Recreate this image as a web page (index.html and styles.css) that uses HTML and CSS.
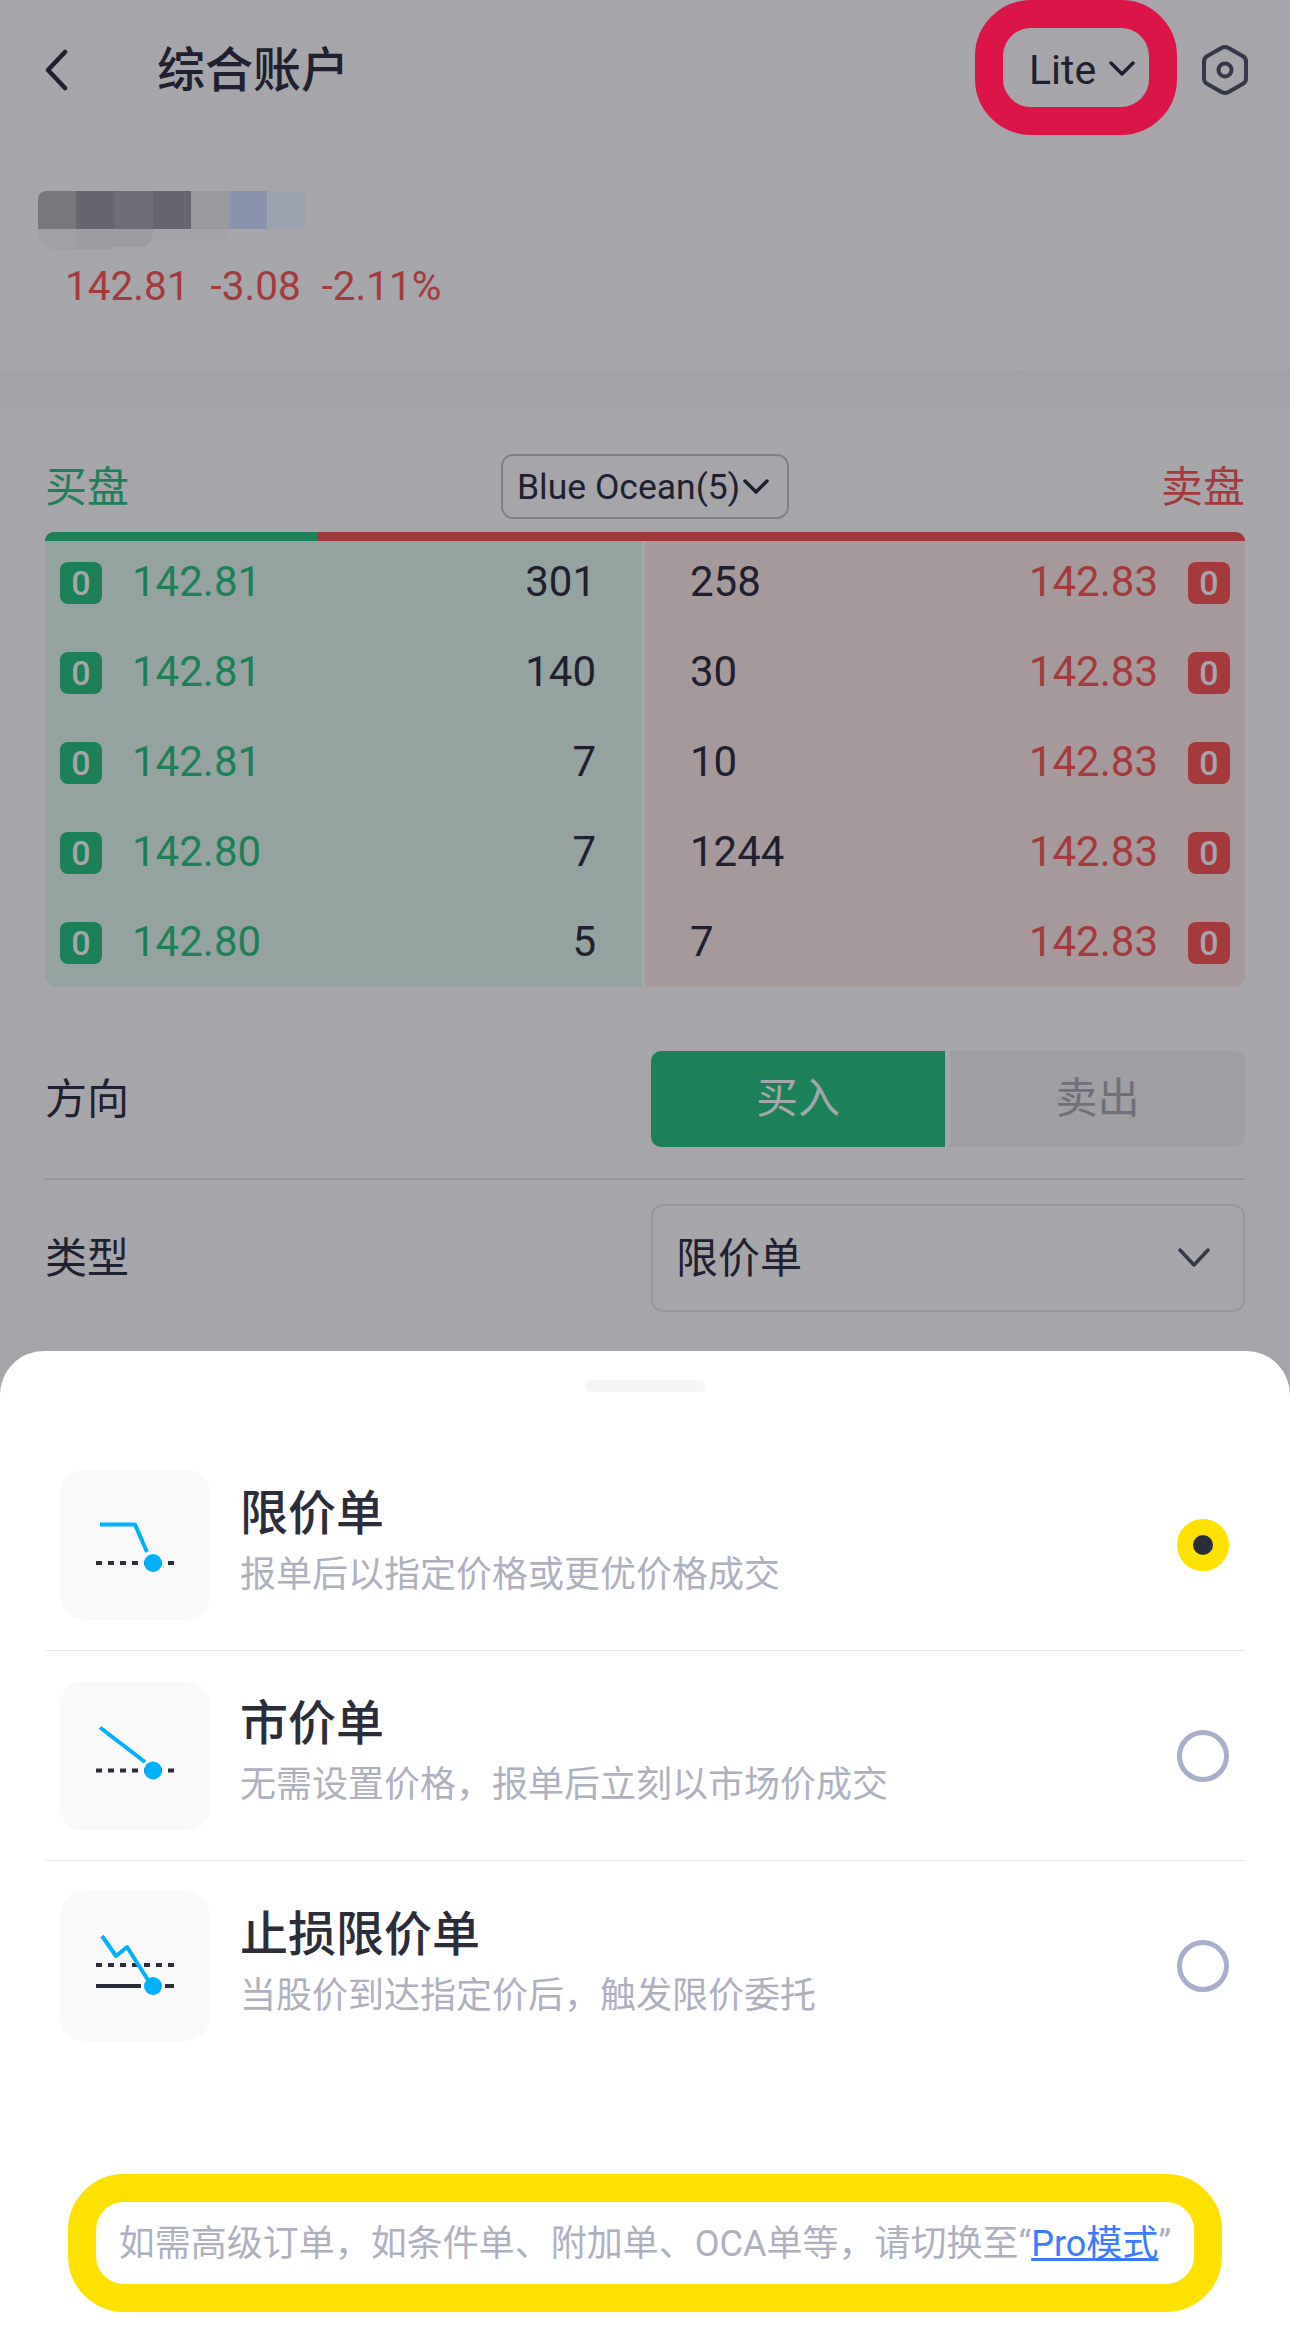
FILE: index.html
```html
<!DOCTYPE html>
<html lang="zh-CN">

<head>
    <meta charset="UTF-8">
    <meta name="viewport" content="width=device-width, initial-scale=1.0">
    <title>综合账户</title>
    <link rel="stylesheet" href="styles.css">
</head>

<body>
    <main class="page">
        <header class="topbar">
            <svg class="back" viewBox="0 0 24 42"><path d="M21 3 4 21l17 18" /></svg>
            <h1 class="title">综合账户</h1>
            <div class="mode">
                <span>Lite</span>
                <svg class="mode-arrow" viewBox="0 0 26 16"><path d="M2 2l11 11L24 2" /></svg>
            </div>
            <svg class="settings" viewBox="0 0 50 52">
                <path d="M21 4.2a8 8 0 0 1 8 0l14 8a6 6 0 0 1 3 5.2v17.200a6 6 0 0 1-3 5.200l-14 8a8 8 0 0 1-8 0l-14-8a6 6 0 0 1-3-5.200V17.400a6 6 0 0 1 3-5.200z" />
                <circle cx="25" cy="26" r="6.500" />
            </svg>
        </header>

        <section class="quote">
            <div class="mosaic">
                <i class="m1"></i><i class="m2"></i><i class="m3"></i><i class="m4"></i><i class="m5"></i><i class="m6"></i><i class="m7"></i>
            </div>
            <div class="mosaic-low">
                <i class="l1"></i><i class="l2"></i><i class="l3"></i><i class="l4"></i><i class="l5"></i>
            </div>
            <div class="last">
                <span>142.81</span><span>-3.08</span><span>-2.11%</span>
            </div>
        </section>
        <div class="band"></div>

        <section class="book">
            <div class="book-head">
                <span class="buy-text">买盘</span>
                <div class="venue">
                    <span>Blue Ocean(5)</span>
                    <svg class="venue-arrow" viewBox="0 0 26 16"><path d="M2 2l11 11L24 2" /></svg>
                </div>
                <span class="sell-text">卖盘</span>
            </div>
            <div class="ratio"><div class="ratio-buy"></div></div>
            <div class="levels">
                <div class="side side-buy">
                    <div class="level"><b class="badge">0</b><span class="px">142.81</span><span class="qty">301</span></div>
                    <div class="level"><b class="badge">0</b><span class="px">142.81</span><span class="qty">140</span></div>
                    <div class="level"><b class="badge">0</b><span class="px">142.81</span><span class="qty">7</span></div>
                    <div class="level"><b class="badge">0</b><span class="px">142.80</span><span class="qty">7</span></div>
                    <div class="level"><b class="badge">0</b><span class="px">142.80</span><span class="qty">5</span></div>
                </div>
                <div class="side side-sell">
                    <div class="level"><span class="qty">258</span><span class="px">142.83</span><b class="badge">0</b></div>
                    <div class="level"><span class="qty">30</span><span class="px">142.83</span><b class="badge">0</b></div>
                    <div class="level"><span class="qty">10</span><span class="px">142.83</span><b class="badge">0</b></div>
                    <div class="level"><span class="qty">1244</span><span class="px">142.83</span><b class="badge">0</b></div>
                    <div class="level"><span class="qty">7</span><span class="px">142.83</span><b class="badge">0</b></div>
                </div>
            </div>
        </section>

        <section class="form">
            <div class="form-row form-row-line">
                <label>方向</label>
                <div class="direction">
                    <span class="dir-buy">买入</span>
                    <span class="dir-sell">卖出</span>
                </div>
            </div>
            <div class="form-row form-row-type">
                <label>类型</label>
                <div class="select">
                    <span>限价单</span>
                    <svg class="select-arrow" viewBox="0 0 32 20"><path d="M2 2l14 15L30 2" /></svg>
                </div>
            </div>
        </section>

        <!-- 底部弹出的订单类型面板 -->
        <aside class="sheet">
            <div class="handle"></div>
            <ul class="options">
                <li class="option">
                    <div class="thumb">
                        <svg viewBox="0 0 150 150">
                            <path class="dash" d="M36 93h78" />
                            <path class="trend" d="M40 54.500h35L87 82" />
                            <circle class="dot" cx="93" cy="93" r="9" />
                        </svg>
                    </div>
                    <div class="option-text">
                        <h2>限价单</h2>
                        <p>报单后以指定价格或更优价格成交</p>
                    </div>
                    <span class="radio radio-on"></span>
                </li>
                <li class="option">
                    <div class="thumb">
                        <svg viewBox="0 0 150 150">
                            <path class="dash" d="M36 89.500h78" />
                            <path class="trend" d="M40 46.500 85 81" />
                            <circle class="dot" cx="93" cy="89.500" r="9" />
                        </svg>
                    </div>
                    <div class="option-text">
                        <h2>市价单</h2>
                        <p>无需设置价格，报单后立刻以市场价成交</p>
                    </div>
                    <span class="radio"></span>
                </li>
                <li class="option">
                    <div class="thumb">
                        <svg viewBox="0 0 150 150">
                            <path class="dash" d="M36 74h78" />
                            <path class="solid" d="M36 95h45M105 95h9" />
                            <path class="trend" d="M42 45l14 20 11-9 21 33" />
                            <circle class="dot" cx="93" cy="95" r="9" />
                        </svg>
                    </div>
                    <div class="option-text">
                        <h2>止损限价单</h2>
                        <p>当股价到达指定价后，触发限价委托</p>
                    </div>
                    <span class="radio"></span>
                </li>
            </ul>
            <p class="note">如需高级订单，如条件单、附加单、OCA单等，请切换至“<a href="javascript:;">Pro模式</a>”</p>
        </aside>
    </main>
</body>

</html>
```

FILE: styles.css
```css
* {
    padding: 0;
    margin: 0;
    box-sizing: border-box;
}

body {
    width: 1290px;
    height: 2351px;
    overflow: hidden;
    background: #a6a5aa;
    font-family: Roboto, "Noto Sans CJK SC", sans-serif;
    color: #1f2030;
}

svg {
    display: block;
    fill: none;
}

.page {
    position: relative;
    display: flex;
    flex-direction: column;
    width: 1290px;
    height: 2351px;
}

/* 顶部导航 */
.topbar {
    display: flex;
    align-items: center;
    height: 135px;
    padding-left: 44px;
}

.back {
    width: 24px;
    height: 42px;
    margin-top: 4px;
}

.back path {
    stroke: #1f2030;
    stroke-width: 4.500;
    stroke-linecap: round;
    stroke-linejoin: round;
}

.title {
    margin-left: 89px;
    margin-top: 6px;
    font-size: 48px;
    font-weight: 500;
    line-height: 1;
}

.mode {
    display: flex;
    align-items: center;
    width: 202px;
    height: 135px;
    margin-left: auto;
    padding-left: 26px;
    padding-top: 5px;
    border: 28px solid #dc1548;
    border-radius: 56px;
    font-size: 41px;
}

.mode-arrow {
    width: 26px;
    height: 16px;
    margin-left: 13px;
    margin-top: -2px;
}

.mode-arrow path,
.venue-arrow path {
    stroke: #1f2030;
    stroke-width: 3.500;
    stroke-linecap: round;
    stroke-linejoin: round;
}

.settings {
    width: 50px;
    height: 52px;
    margin-left: 23px;
    margin-right: 40px;
    margin-top: 5px;
}

.settings path,
.settings circle {
    stroke: #353849;
    stroke-width: 4;
}

/* 打码的标的名称和行情 */
.quote {
    height: 235px;
    padding: 56px 0 0 38px;
}

.mosaic,
.mosaic-low {
    display: flex;
}

.mosaic i {
    display: block;
    width: 38.200px;
    height: 38px;
}

.mosaic .m1 {
    background: #77787d;
    border-top-left-radius: 8px;
}

.m2 { background: #66666e; }
.m3 { background: #6e6e76; }
.m4 { background: #66676e; }
.m5 { background: #99989c; }
.m6 { background: #8a93ad; }
.m7 { background: #9ca1b0; }

.mosaic-low i {
    display: block;
    width: 38.200px;
    height: 21px;
}

.mosaic-low .l1 {
    background: #a09fa3;
    border-bottom-left-radius: 20px;
}

.mosaic-low .l2 {
    background: #9d9ca0;
    height: 20px;
}

.mosaic-low .l3 {
    background: #9c9ba0;
    height: 18px;
    border-bottom-right-radius: 14px;
}

.l4,
.l5 {
    background: #a4a3a7;
    height: 12px !important;
}

.last {
    display: flex;
    gap: 21px;
    margin: 14px 0 0 27px;
    font-size: 40.500px;
    line-height: 44px;
    color: #a53a3d;
}

.band {
    height: 63px;
    background: linear-gradient(#a2a1a5, #a6a5aa);
}

/* 买卖盘 */
.book {
    padding: 21px 45px 0;
}

.book-head {
    display: flex;
    align-items: center;
    justify-content: space-between;
    height: 65px;
    font-size: 42px;
}

.buy-text,
.sell-text {
    padding-bottom: 6px;
}

.buy-text {
    color: #1c8159;
}

.sell-text {
    color: #a53a3d;
}

.venue {
    display: flex;
    align-items: center;
    width: 288px;
    height: 65px;
    padding-left: 14px;
    border: 2px solid #7f808c;
    border-radius: 12px;
    font-size: 35.500px;
}

.venue-arrow {
    width: 26px;
    height: 16px;
    margin-left: 3px;
}

.ratio {
    height: 9px;
    margin-top: 13px;
    background: #9e383b;
    border-radius: 12px 12px 0 0;
    overflow: hidden;
}

.ratio-buy {
    width: 273px;
    height: 9px;
    background: #1c8159;
}

.levels {
    display: flex;
    gap: 3px;
    background: #a9a5a8;
    border-radius: 0 0 12px 12px;
    overflow: hidden;
}

.side {
    display: flex;
    flex-direction: column;
    gap: 48px;
    padding-top: 21px;
    padding-bottom: 23px;
}

.side-buy {
    width: 597px;
    background: #95a3a0;
    padding-left: 15px;
    padding-right: 46px;
}

.side-sell {
    flex: 1;
    background: #a5999c;
    padding-left: 45px;
    padding-right: 15px;
}

.level {
    display: flex;
    align-items: center;
    height: 42px;
    font-size: 42px;
}

.level span {
    padding-bottom: 3px;
}

.badge {
    width: 42px;
    height: 42px;
    border-radius: 8px;
    font-size: 34px;
    font-weight: 500;
    line-height: 42px;
    text-align: center;
    color: #a6a5aa;
}

.side-buy .badge {
    background: #1c8159;
}

.side-sell .badge {
    background: #a53a3d;
}

.side-buy .px {
    margin-left: 30px;
    color: #1c8159;
}

.side-buy .qty {
    margin-left: auto;
}

.side-sell .px {
    margin-left: auto;
    margin-right: 30px;
    color: #a53a3d;
}

/* 下单表单 */
.form {
    margin-top: 64px;
    padding: 0 45px;
}

.form-row {
    display: flex;
    align-items: center;
    justify-content: space-between;
    font-size: 42px;
}

.form-row label {
    padding-bottom: 7px;
}

.form-row-line {
    padding-bottom: 31px;
    border-bottom: 2px solid #97969c;
}

.form-row-type {
    padding-top: 24px;
}

.direction {
    display: flex;
    gap: 5px;
    width: 594px;
    height: 96px;
    line-height: 96px;
    text-align: center;
}

.dir-buy {
    width: 294px;
    background: #1c8159;
    border-radius: 10px 0 0 10px;
    color: #a6a5aa;
}

.dir-sell {
    flex: 1;
    background: #9f9ea3;
    border-radius: 0 10px 10px 0;
    color: #6f707c;
}

.select {
    display: flex;
    align-items: center;
    justify-content: space-between;
    width: 594px;
    height: 108px;
    padding: 0 33px 0 23px;
    border: 2px solid #97969c;
    border-radius: 12px;
}

.select span {
    padding-bottom: 7px;
}

.select-arrow {
    width: 32px;
    height: 20px;
}

.select-arrow path {
    stroke: #353849;
    stroke-width: 3.500;
    stroke-linecap: round;
    stroke-linejoin: round;
}

/* 底部面板 */
.sheet {
    position: absolute;
    left: 0;
    right: 0;
    top: 1351px;
    bottom: 0;
    padding: 29px 45px 0;
    background: #fff;
    border-radius: 44px 44px 0 0;
}

.handle {
    width: 120px;
    height: 12px;
    margin: 0 auto;
    background: #f5f5f5;
    border-radius: 6px;
}

.options {
    margin-top: 48px;
    list-style: none;
}

.option {
    display: flex;
    align-items: center;
    padding: 30px 16px 29.500px 15px;
    border-bottom: 1px solid #e6e6e8;
}

.option:last-child {
    border-bottom: none;
}

.thumb {
    flex: none;
    width: 150px;
    height: 150px;
    background: #f9f9f9;
    border-radius: 24px;
}

.thumb svg {
    width: 150px;
    height: 150px;
}

.dash {
    stroke: #2b2d3b;
    stroke-width: 4;
    stroke-dasharray: 6 6;
}

.solid {
    stroke: #2b2d3b;
    stroke-width: 4;
}

.trend {
    stroke: #00b1ff;
    stroke-width: 4;
    stroke-linejoin: round;
}

.dot {
    fill: #00b1ff;
}

.option-text {
    flex: 1;
    margin-left: 30px;
}

.option-text h2 {
    font-size: 48px;
    font-weight: 500;
    line-height: 58px;
    margin-top: -6px;
    color: #2b2d3b;
}

.option-text p {
    margin-top: 7px;
    font-size: 36px;
    line-height: 50px;
    color: #aeb0bf;
}

.radio {
    flex: none;
    width: 52px;
    height: 52px;
    border: 5px solid #a9aecb;
    border-radius: 50%;
}

.radio-on {
    border: 16px solid #ffe100;
    background: #2b2d3b;
}

.note {
    height: 138px;
    margin: 103px 23px 0;
    border: 28px solid #ffe100;
    border-radius: 56px;
    font-size: 36px;
    line-height: 84px;
    text-align: center;
    white-space: nowrap;
    color: #aeb0bf;
}

.note a {
    color: #3a7bff;
}
```
